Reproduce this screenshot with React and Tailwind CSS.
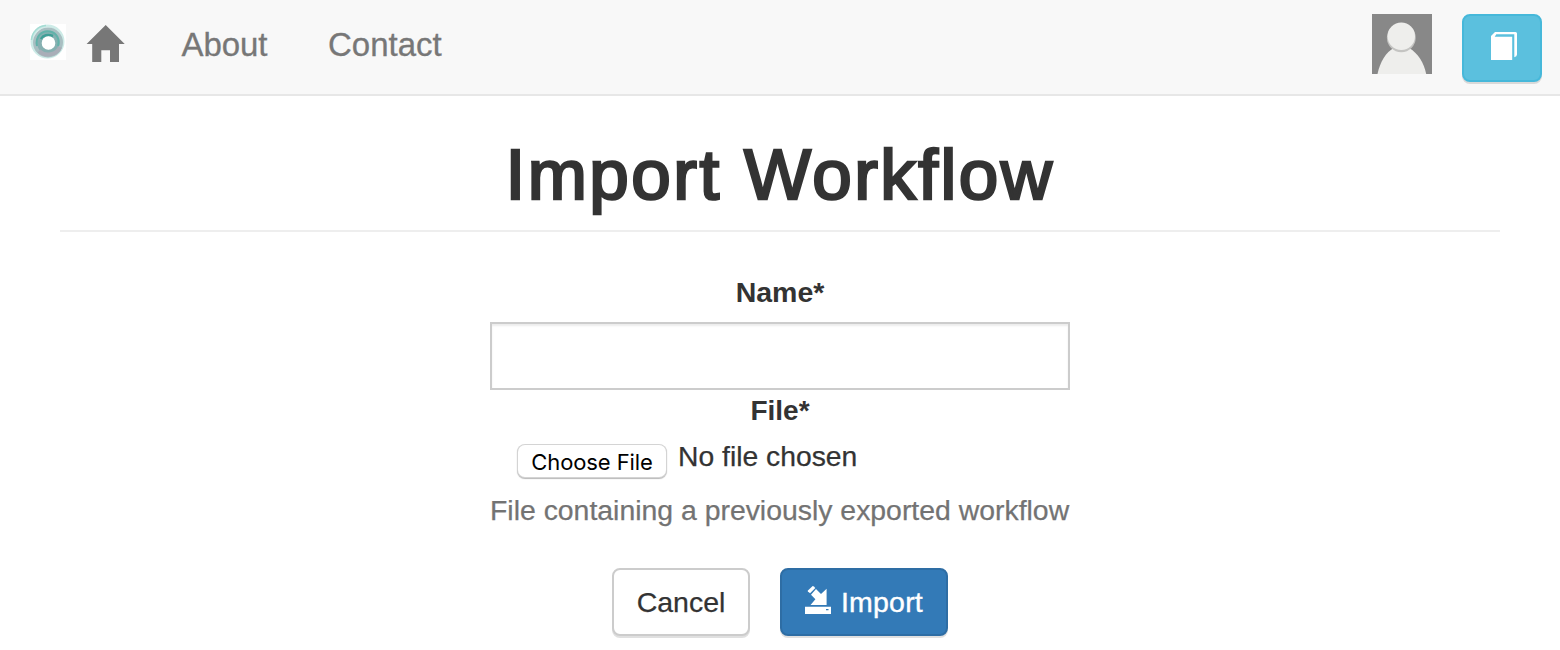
import React from "react";

function Logo() {
  return (
    <svg viewBox="0 0 36 36" className="block h-9 w-9">
      <defs>
        <filter id="soft" x="-20%" y="-20%" width="140%" height="140%">
          <feGaussianBlur stdDeviation="0.6" />
        </filter>
        <clipPath id="box">
          <rect width="36" height="36" />
        </clipPath>
      </defs>
      <rect width="36" height="36" fill="#ffffff" />
      <g fill="none" filter="url(#soft)" clipPath="url(#box)">
        <circle cx="17.5" cy="17.5" r="15.5" stroke="#cdebe7" strokeWidth="3" />
        <circle cx="18" cy="18.5" r="12.5" stroke="#a9bfc2" strokeWidth="5" />
        <circle cx="18.3" cy="19" r="8.7" stroke="#86b0b1" strokeWidth="5" />
        <path d="M7 22C5 12 12 6 20 7.500C27 9 30 15 28 22" stroke="#62b2aa" strokeWidth="2" />
        <path d="M9 27C15 33 27 31 30 23" stroke="#a9aeb8" strokeWidth="4" />
        <path d="M11 15C13 11 18 10 23 12" stroke="#3f9f97" strokeWidth="2.500" />
        <path d="M1.500 16C2 8 8 2 16 1.500" stroke="#a5dcd4" strokeWidth="1.500" />
      </g>
      <circle cx="18.500" cy="19" r="6.800" fill="#ffffff" filter="url(#soft)" />
    </svg>
  );
}

function Home() {
  return (
    <svg viewBox="0 0 40 38" className="block h-[38px] w-10" fill="#777777">
      <path d="M19.700 0L38.700 19H33V37H24V25.200H15.300V37H6.200V19H0.600Z" />
    </svg>
  );
}

function Avatar() {
  return (
    <svg viewBox="0 0 60 60" className="block h-15 w-15">
      <rect width="60" height="60" fill="#888888" />
      <path d="M5.500 60C8 48 14 38 22 34H37C46 39 52 49 54.200 60Z" fill="#eeeeec" />
      <circle cx="29.300" cy="23.800" r="14.400" fill="#c4c4c2" />
      <circle cx="29.300" cy="22.300" r="13.700" fill="#eeeeec" />
    </svg>
  );
}

function Book() {
  return (
    <svg viewBox="0 0 26 28" className="block h-7 w-[26px]" fill="#ffffff">
      <path d="M0 4L4 0H24.500Q26 0 26 1.500V22.500Q26 24.500 23.300 25.300V2.200H5.300L3.700 4.700H21.200V28H0Z" />
    </svg>
  );
}

function ImportIcon() {
  return (
    <svg viewBox="0 0 26 28" className="block h-7 w-[26px]" fill="#ffffff">
      <path d="M2.900 4.600L7.400 0.300Q8.100 -0.200 8.800 0.500L10.300 2.100L5.100 7.200L2.900 5.500Q2.500 5 2.900 4.600Z" />
      <path d="M11 3L16 8L21.600 2.700V19H5.500L10.400 13.300L6 8.700Z" />
      <path fillRule="evenodd" d="M0 20.800H26V28H0ZM21 23V24.300H23.500V23Z" />
    </svg>
  );
}

export default function App() {
  return (
    <div className="h-[650px] w-[1560px] overflow-hidden bg-white font-['Liberation_Sans',Arial,sans-serif] text-[#333333]">
      <nav className="flex h-24 items-start justify-between border-b-2 border-[#e7e7e7] bg-[#f8f8f8] pr-[18px] pl-[30px]">
        <div className="flex items-start text-[33px] leading-9 text-[#777777]">
          <div className="mt-6"><Logo /></div>
          <div className="mt-[25px] ml-5"><Home /></div>
          <a className="mt-[27px] ml-[55.5px] w-[87px] tracking-[-0.1px] whitespace-nowrap [-webkit-text-stroke:0.3px_#777777]">About</a>
          <a className="mt-[27px] ml-[59.5px] whitespace-nowrap [-webkit-text-stroke:0.3px_#777777]">Contact</a>
        </div>
        <div className="mt-3.5 flex items-start gap-[30px]">
          <Avatar />
          <button className="flex h-[68px] w-20 items-start justify-center rounded-lg border-2 border-[#46b8da] bg-[#5bc0de] pt-4 pl-[3px] shadow-[0_2px_0_#d9d9d9]">
            <Book />
          </button>
        </div>
      </nav>

      <header className="mx-[60px] flex h-34 justify-center border-b-2 border-[#eeeeee] pt-[39px]">
        <h1 className="text-[71px] leading-[80px] font-normal tracking-[2.5px] whitespace-nowrap [-webkit-text-stroke:2.6px_#333333]">Import Workflow</h1>
      </header>

      <form className="mx-auto flex w-[580px] flex-col" onSubmit={(e) => e.preventDefault()}>
        <label className="mt-10 h-10 text-center text-[28.5px] leading-10 font-bold">Name*</label>
        <input aria-label="Name" className="mt-2.5 h-[68px] w-full border-2 border-[#cccccc] bg-white px-6 text-[28px] shadow-[inset_0_2px_2px_rgba(0,0,0,0.075)] outline-none" />
        <label className="mt-px h-[39px] text-center text-[28px] leading-10 font-bold">File*</label>
        <div className="flex h-12 items-start pl-7">
          <button type="button" className="mt-[15px] flex h-8 w-[148px] items-center justify-center rounded-[7px] bg-white pt-[3px] font-['Inter',sans-serif] text-[22px] tracking-[-0.1px] whitespace-nowrap text-black shadow-[0_0_0_1px_#d4d4d4,0_1px_1px_1px_#b8b8b8]">Choose File</button>
          <span className="mt-1.5 ml-3 text-[28.3px] leading-10 whitespace-nowrap [-webkit-text-stroke:0.25px_#333333]">No file chosen</span>
        </div>
        <p className="mt-3 h-10 text-[28.4px] leading-10 whitespace-nowrap text-[#737373] [-webkit-text-stroke:0.25px_#737373]">File containing a previously exported workflow</p>
        <div className="mt-[38px] flex justify-center gap-[30px] text-[28.5px] leading-10 whitespace-nowrap">
          <button type="button" className="h-[68px] w-[138px] rounded-lg border-2 border-[#cccccc] bg-white shadow-[0_2px_0_#e0e0e0] [-webkit-text-stroke:0.25px_#333333]">Cancel</button>
          <button type="submit" className="flex h-[68px] w-[168px] items-center rounded-lg border-2 border-[#2e6da4] bg-[#337ab7] pl-[23px] text-white shadow-[0_2px_0_#e0e0e0]">
            <span className="mb-1"><ImportIcon /></span>
            <span className="ml-2.5 tracking-[0.2px] [-webkit-text-stroke:0.4px_#ffffff]">Import</span>
          </button>
        </div>
      </form>
    </div>
  );
}
